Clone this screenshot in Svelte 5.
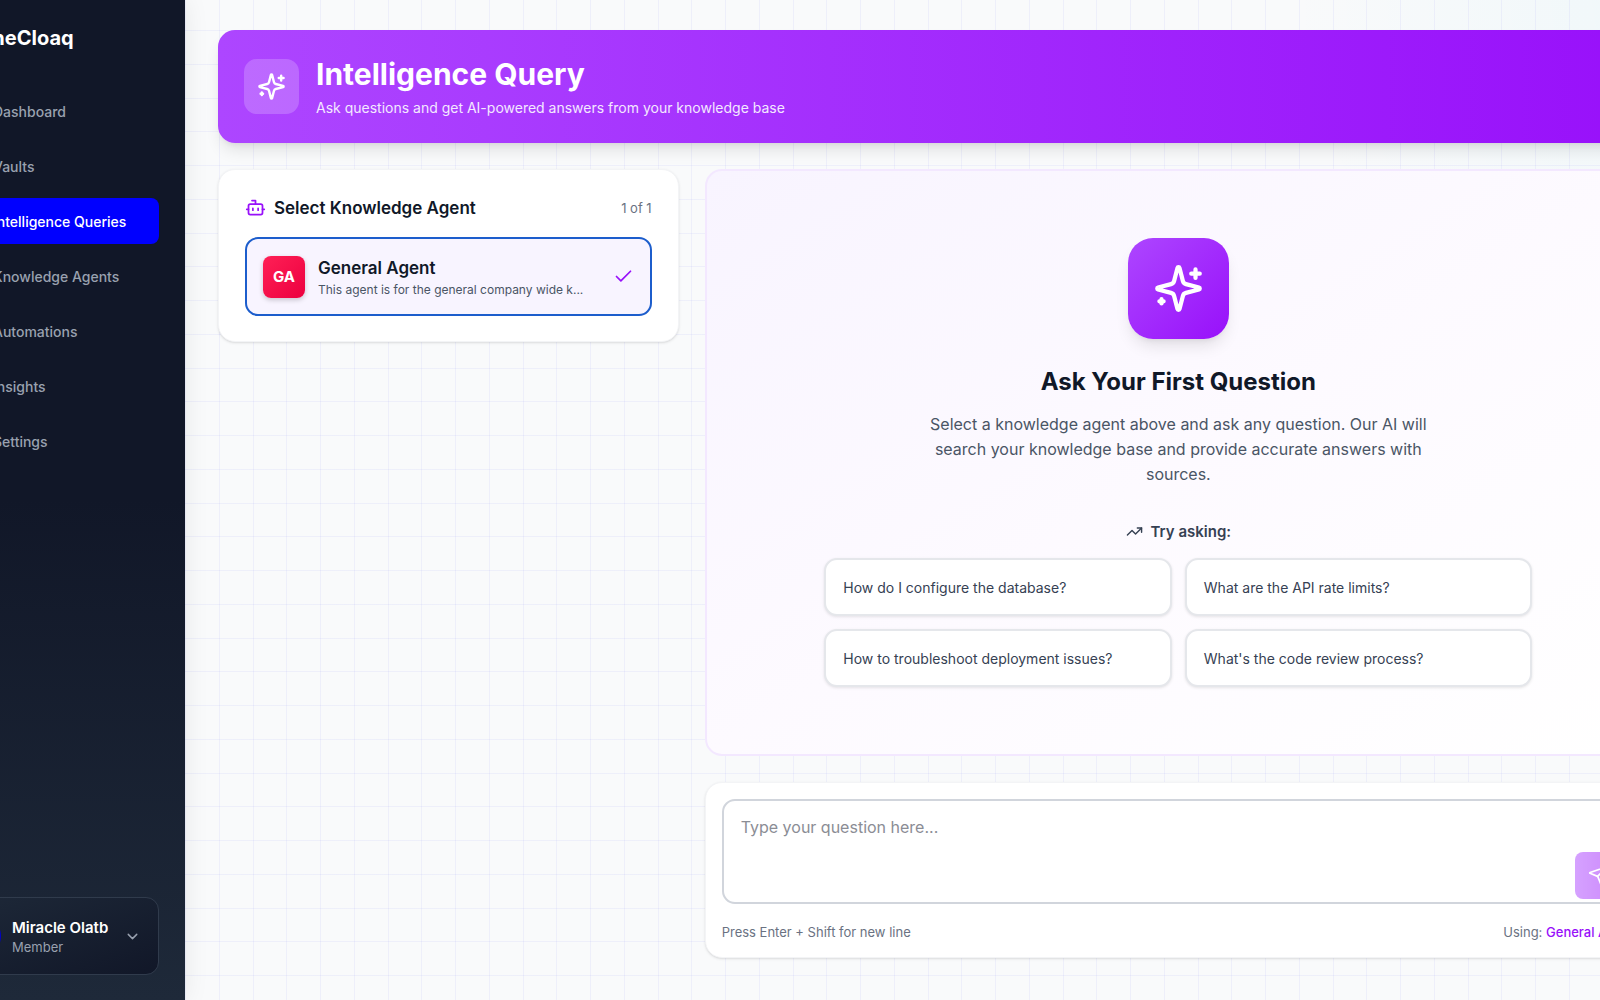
<script lang="ts">
  interface NavItem {
    id: string;
    label: string;
  }

  interface Agent {
    initials: string;
    name: string;
    description: string;
  }

  const navItems: NavItem[] = [
    { id: "dashboard", label: "Dashboard" },
    { id: "vaults", label: "Vaults" },
    { id: "queries", label: "Intelligence Queries" },
    { id: "agents", label: "Knowledge Agents" },
    { id: "automations", label: "Automations" },
    { id: "insights", label: "Insights" },
    { id: "settings", label: "Settings" },
  ];

  const agents: Agent[] = [
    {
      initials: "GA",
      name: "General Agent",
      description: "This agent is for the general company wide k...",
    },
  ];

  const suggestions = [
    "How do I configure the database?",
    "What are the API rate limits?",
    "How to troubleshoot deployment issues?",
    "What's the code review process?",
  ];

  let activePage = $state("queries");
  let selectedIndex = $state(0);
  let question = $state("");

  let selected = $derived(agents[selectedIndex]);
</script>

{#snippet sparkles()}
  <svg class="icon" viewBox="0 0 24 24" aria-hidden="true">
    <path d="M9.937 15.5A2 2 0 0 0 8.5 14.063l-6.135-1.582a.5.5 0 0 1 0-.962L8.5 9.936A2 2 0 0 0 9.937 8.5l1.582-6.135a.5.5 0 0 1 .963 0L14.063 8.5A2 2 0 0 0 15.5 9.937l6.135 1.581a.5.5 0 0 1 0 .964L15.5 14.063a2 2 0 0 0-1.437 1.437l-1.582 6.135a.5.5 0 0 1-.963 0z" />
    <path d="M20 3v4M22 5h-4M4 17v2M5 18H3" />
  </svg>
{/snippet}

<div class="shell">
  <aside class="sidebar">
    <div class="brand">
      <span class="brand-mark"></span>
      <span class="brand-name">TheCloaq</span>
    </div>

    <nav class="nav">
      {#each navItems as item (item.id)}
        <a
          class="nav-item"
          class:active={item.id === activePage}
          href="#{item.id}"
          onclick={() => (activePage = item.id)}
        >
          <span class="nav-icon"></span>
          {item.label}
        </a>
      {/each}
    </nav>

    <button class="user-card">
      <span class="user-avatar"></span>
      <span class="user-text">
        <span class="user-name">Miracle Olatb</span>
        <span class="user-role">Member</span>
      </span>
      <svg class="icon chevron" viewBox="0 0 24 24" aria-hidden="true">
        <path d="m6 9 6 6 6-6" />
      </svg>
    </button>
  </aside>

  <main class="main">
    <header class="banner">
      <div class="banner-icon">{@render sparkles()}</div>
      <div>
        <h1>Intelligence Query</h1>
        <p>Ask questions and get AI-powered answers from your knowledge base</p>
      </div>
    </header>

    <div class="columns">
      <section class="card agents">
        <div class="agents-head">
          <svg class="icon bot" viewBox="0 0 24 24" aria-hidden="true">
            <path d="M12 8V4H8" />
            <rect width="16" height="12" x="4" y="8" rx="2" />
            <path d="M2 14h2M20 14h2M15 13v2M9 13v2" />
          </svg>
          <h2>Select Knowledge Agent</h2>
          <span class="count">{selectedIndex + 1} of {agents.length}</span>
        </div>

        {#each agents as agent, i (agent.name)}
          <button class="agent" class:selected={i === selectedIndex} onclick={() => (selectedIndex = i)}>
            <span class="agent-avatar">{agent.initials}</span>
            <span class="agent-text">
              <span class="agent-name">{agent.name}</span>
              <span class="agent-desc">{agent.description}</span>
            </span>
            {#if i === selectedIndex}
              <svg class="icon check" viewBox="0 0 24 24" aria-hidden="true">
                <path d="M20 6 9 17l-5-5" />
              </svg>
            {/if}
          </button>
        {/each}
      </section>

      <div class="chat">
        <section class="empty">
          <div class="empty-icon">{@render sparkles()}</div>
          <h2>Ask Your First Question</h2>
          <p class="lead">
            Select a knowledge agent above and ask any question. Our AI will search your knowledge base and provide
            accurate answers with sources.
          </p>
          <h3>
            <svg class="icon trend" viewBox="0 0 24 24" aria-hidden="true">
              <path d="M16 7h6v6" />
              <path d="m22 7-8.500 8.500-5-5L2 17" />
            </svg>
            Try asking:
          </h3>
          <div class="suggestions">
            {#each suggestions as text (text)}
              <button class="suggestion" onclick={() => (question = text)}>{text}</button>
            {/each}
          </div>
        </section>

        <form class="card composer" onsubmit={(e) => e.preventDefault()}>
          <div class="field">
            <textarea aria-label="Question" placeholder="Type your question here..." bind:value={question}></textarea>
            <button class="send" type="submit" aria-label="Send" disabled={!question.trim()}>
              <svg class="icon" viewBox="0 0 24 24" aria-hidden="true">
                <path d="M14.536 21.686a.5.5 0 0 0 .937-.024l6.5-19a.496.496 0 0 0-.635-.635l-19 6.5a.5.5 0 0 0-.024.937l7.930 3.180a2 2 0 0 1 1.112 1.110z" />
                <path d="m21.854 2.147-10.940 10.939" />
              </svg>
            </button>
          </div>
          <div class="composer-foot">
            <span>Press Enter + Shift for new line</span>
            <span>Using: <strong>{selected.name}</strong></span>
          </div>
        </form>
      </div>
    </div>
  </main>
</div>

<style>
  :global(body) {
    font-family: Inter, "Liberation Sans", sans-serif;
    color: #101828;
  }

  h1,
  h2,
  h3,
  p {
    margin: 0;
  }

  button,
  textarea {
    font-family: inherit;
    box-sizing: border-box;
  }

  button {
    cursor: pointer;
  }

  .icon {
    display: block;
    flex-shrink: 0;
    fill: none;
    stroke: currentColor;
    stroke-width: 2;
    stroke-linecap: round;
    stroke-linejoin: round;
  }

  .shell {
    display: flex;
    min-height: 100vh;
    overflow: hidden;
  }

  /* Sidebar */
  .sidebar {
    flex: 0 0 270px;
    z-index: 1;
    box-sizing: border-box;
    display: flex;
    flex-direction: column;
    margin-left: -85px;
    padding: 25px 26px;
    background: linear-gradient(to bottom, #111728, #111728 50%, #1e2939);
    box-shadow: 0 0 24px rgba(0, 0, 0, 0.08);
  }

  .brand {
    display: flex;
    align-items: center;
    gap: 17px;
    height: 26px;
    margin-bottom: 37px;
  }

  .brand-mark {
    width: 21px;
  }

  .brand-name {
    color: #ffffff;
    font-size: 20px;
    font-weight: 700;
  }

  .nav {
    display: flex;
    flex-direction: column;
    gap: 9px;
  }

  .nav-item {
    display: flex;
    align-items: center;
    gap: 14px;
    height: 46px;
    padding: 0 17px;
    border-radius: 8px;
    color: #99a1af;
    font-size: 14px;
    font-weight: 500;
    text-decoration: none;
    white-space: nowrap;
  }

  .nav-item.active {
    background: #0000ff;
    color: #ffffff;
  }

  .nav-icon {
    width: 21px;
  }

  .user-card {
    display: flex;
    align-items: center;
    gap: 11px;
    margin-top: auto;
    padding: 17px;
    border: 1px solid #303b4c;
    border-radius: 13px;
    background: linear-gradient(to bottom right, #1e2939, #111728);
    text-align: left;
  }

  .user-avatar {
    width: 42px;
    height: 42px;
    border-radius: 50%;
    background: #0000c8;
  }

  .user-text {
    display: flex;
    flex: 1;
    flex-direction: column;
  }

  .user-name {
    color: #ffffff;
    font-size: 15px;
    font-weight: 600;
    line-height: 21px;
    white-space: nowrap;
  }

  .user-role {
    color: #99a1af;
    font-size: 13px;
    line-height: 18px;
  }

  .chevron {
    width: 17px;
    height: 17px;
    color: #99a1af;
  }

  /* Page, on a faint grid: four cells to each 135px tile */
  .main {
    --line: rgba(99, 102, 241, 0.07);
    flex: 1;
    min-width: 0;
    margin-right: -85px;
    padding: 30px 33px 41px;
    background-color: #f9fafb;
    background-image:
      linear-gradient(
        to right,
        var(--line) 1px,
        transparent 1px 34px,
        var(--line) 34px 35px,
        transparent 35px 68px,
        var(--line) 68px 69px,
        transparent 69px 101px,
        var(--line) 101px 102px,
        transparent 102px
      ),
      linear-gradient(
        to bottom,
        transparent 30px,
        var(--line) 30px 31px,
        transparent 31px 64px,
        var(--line) 64px 65px,
        transparent 65px 98px,
        var(--line) 98px 99px,
        transparent 99px 131px,
        var(--line) 131px 132px,
        transparent 132px
      ),
      radial-gradient(circle at top right, rgba(0, 184, 219, 0.04), transparent 400px);
    background-size:
      135px 135px,
      135px 135px,
      auto;
  }

  .banner {
    display: flex;
    align-items: center;
    gap: 17px;
    padding: 25px 26px;
    border-radius: 17px;
    background: linear-gradient(to right, #ad46ff, #9810fa);
    box-shadow:
      0 10px 16px -3px rgba(0, 0, 0, 0.1),
      0 4px 6px -4px rgba(0, 0, 0, 0.1);
    color: #ffffff;
  }

  .banner-icon {
    padding: 13px;
    border-radius: 13px;
    background: rgba(255, 255, 255, 0.2);
  }

  .banner-icon .icon {
    width: 29px;
    height: 29px;
  }

  .banner h1 {
    margin-bottom: 3px;
    font-size: 30px;
    font-weight: 700;
    line-height: 39px;
  }

  .banner p {
    color: #f3e8ff;
    font-size: 14px;
    line-height: 21px;
  }

  .columns {
    display: grid;
    grid-template-columns: repeat(3, 1fr);
    align-items: start;
    gap: 26px;
    margin-top: 26px;
  }

  .card {
    border: 1px solid #f3f4f6;
    border-radius: 17px;
    background: #ffffff;
    box-shadow:
      0 1px 3px rgba(0, 0, 0, 0.1),
      0 1px 2px -1px rgba(0, 0, 0, 0.1);
  }

  .agents {
    min-width: 0;
    padding: 25px 26px;
  }

  .agents-head {
    display: flex;
    align-items: center;
    gap: 8px;
    height: 25px;
    margin-bottom: 17px;
  }

  .agents-head h2 {
    flex: 1;
    font-size: 17px;
    font-weight: 600;
  }

  .bot,
  .check {
    width: 21px;
    height: 21px;
    color: #9810fa;
  }

  .count {
    color: #6a7282;
    font-size: 13px;
  }

  .agent {
    display: flex;
    align-items: center;
    gap: 13px;
    width: 100%;
    padding: 16px;
    border: 2px solid #e5e7eb;
    border-radius: 13px;
    background: #ffffff;
    text-align: left;
  }

  .agent.selected {
    border-color: #1c5dcc;
    background: #f8f4ff;
  }

  .agent-avatar {
    display: grid;
    flex-shrink: 0;
    place-items: center;
    width: 42px;
    height: 42px;
    border-radius: 8px;
    background: linear-gradient(to bottom right, #ff2056, #ec003f);
    box-shadow: 0 2px 5px rgba(0, 0, 0, 0.2);
    color: #ffffff;
    font-size: 15px;
    font-weight: 700;
  }

  .agent-text {
    display: flex;
    flex: 1;
    flex-direction: column;
    min-width: 0;
  }

  .agent-name {
    color: #101828;
    font-size: 17px;
    font-weight: 600;
    line-height: 26px;
  }

  .agent-desc {
    overflow: hidden;
    color: #4a5565;
    font-size: 12px;
    line-height: 17px;
    text-overflow: ellipsis;
    white-space: nowrap;
  }

  .chat {
    display: flex;
    grid-column: span 2;
    flex-direction: column;
    gap: 26px;
  }

  .empty {
    display: flex;
    flex-direction: column;
    align-items: center;
    padding: 67px 32px;
    border: 2px solid #f3e8ff;
    border-radius: 17px;
    background: linear-gradient(to bottom right, #f8f4ff, #fdfaff 50%, #ffffff);
    text-align: center;
  }

  .empty-icon {
    margin-bottom: 26px;
    padding: 25px;
    border-radius: 25px;
    background: linear-gradient(to bottom right, #ad46ff, #9810fa);
    box-shadow:
      0 10px 16px -3px rgba(0, 0, 0, 0.1),
      0 4px 6px -4px rgba(0, 0, 0, 0.1);
    color: #ffffff;
  }

  .empty-icon .icon {
    width: 51px;
    height: 51px;
  }

  .empty h2 {
    margin-bottom: 13px;
    font-size: 24px;
    font-weight: 700;
    line-height: 34px;
  }

  .lead {
    max-width: 528px;
    margin-bottom: 34px;
    color: #4a5565;
    font-size: 16px;
    line-height: 25px;
  }

  .empty h3 {
    display: flex;
    align-items: center;
    gap: 8px;
    margin-bottom: 16px;
    color: #364153;
    font-size: 15px;
    font-weight: 600;
    line-height: 21px;
  }

  .trend {
    width: 17px;
    height: 17px;
  }

  .suggestions {
    display: grid;
    grid-template-columns: 1fr 1fr;
    gap: 13px;
    width: 100%;
    max-width: 708px;
  }

  .suggestion {
    height: 58px;
    padding: 0 17px;
    border: 2px solid #e5e7eb;
    border-radius: 13px;
    background: #ffffff;
    box-shadow: 0 1px 3px rgba(0, 0, 0, 0.1);
    color: #364153;
    font-size: 14px;
    text-align: left;
  }

  .composer {
    padding: 16px;
  }

  .field {
    position: relative;
  }

  .field textarea {
    display: block;
    width: 100%;
    height: 105px;
    padding: 14px 64px 14px 17px;
    border: 2px solid #d1d5dc;
    border-radius: 13px;
    outline: none;
    color: #101828;
    font-size: 16px;
    line-height: 25px;
    resize: none;
  }

  .field textarea::placeholder {
    color: #8b8d95;
  }

  .send {
    position: absolute;
    right: 13px;
    bottom: 5px;
    padding: 13px;
    border: none;
    border-radius: 8px;
    background: linear-gradient(to right, #ad46ff, #9810fa);
    color: #ffffff;
  }

  .send:disabled {
    opacity: 0.5;
  }

  .send .icon {
    width: 21px;
    height: 21px;
  }

  .composer-foot {
    display: flex;
    justify-content: space-between;
    margin-top: 19px;
    color: #6a7282;
    font-size: 13px;
    line-height: 18px;
  }

  .composer-foot strong {
    color: #9810fa;
    font-weight: 500;
  }
</style>
